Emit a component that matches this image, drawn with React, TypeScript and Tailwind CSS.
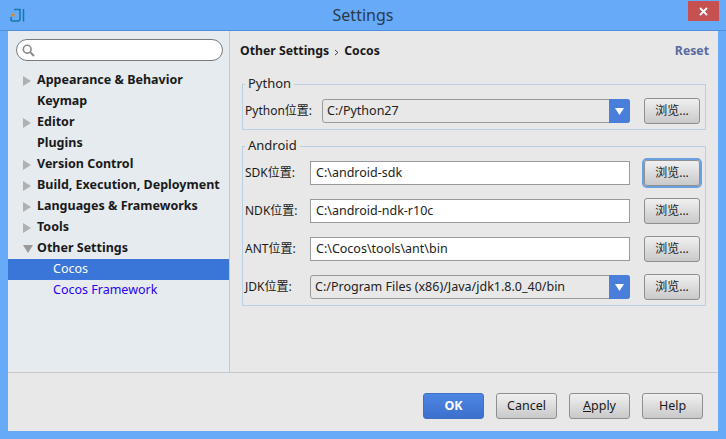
import React from "react";

const font = { fontFamily: '"Noto Sans", "Noto Sans CJK SC", sans-serif' };

const TreeRow = ({ label, arrow }: { label: string; arrow?: "right" | "down" }) => (
  <div className="flex h-[21px] items-center pl-[15px] text-[12.5px] font-bold text-[#1a1a1a]">
    <span className="flex w-[14px] items-center">
      {arrow === "right" && (
        <svg width="8" height="10" viewBox="0 0 8 10">
          <path d="M0 0 L8 5 L0 10 Z" fill="#b0b0b0" />
        </svg>
      )}
      {arrow === "down" && (
        <svg width="10" height="8" viewBox="0 0 10 8">
          <path d="M0 0 L10 0 L5 8 Z" fill="#9a9a9a" />
        </svg>
      )}
    </span>
    {label}
  </div>
);

const BrowseButton = ({ focused }: { focused?: boolean }) => (
  <button
    className={`h-[26px] w-[56px] shrink-0 rounded-[3px] border border-[#8f8f8f] bg-linear-to-b from-[#f0f0f0] to-[#c9c9c9] text-[12px] text-[#1a1a1a] ${
      focused ? "shadow-[0_0_0_2px_#6a9fe0]" : ""
    }`}
  >
    浏览...
  </button>
);

const PathInput = ({ label, value }: { label: string; value: string }) => (
  <div className="flex h-[26px] items-center">
    <span className="w-[65px] text-[12px] text-[#1a1a1a]">{label}</span>
    <div className="flex h-[24px] w-[320px] items-center border border-[#9a9a9a] bg-white pl-[5px] text-[12.5px] text-[#222]">
      {value}
    </div>
  </div>
);

const PathCombo = ({ value, width }: { value: string; width: string }) => (
  <div className={`flex h-[24px] items-center rounded-[3px] border border-[#9a9a9a] bg-[#e8e8e8] ${width}`}>
    <span className="flex-1 pl-[4px] text-[12.5px] text-[#222]">{value}</span>
    <span className="-m-px flex h-[24px] w-[21px] items-center justify-center rounded-r-[3px] bg-[#4a7edb]">
      <svg width="9" height="7" viewBox="0 0 9 7">
        <path d="M0 0 L9 0 L4.5 7 Z" fill="#fff" />
      </svg>
    </span>
  </div>
);

const DialogButton = ({ children, primary }: { children: React.ReactNode; primary?: boolean }) => (
  <button
    className={`h-[26px] w-[61px] rounded-[3px] border text-[12.5px] ${
      primary
        ? "border-[#3f70c4] bg-linear-to-b from-[#4d85e3] to-[#3d70cd] font-bold text-white"
        : "border-[#8f8f8f] bg-linear-to-b from-[#f0f0f0] to-[#c9c9c9] text-[#1a1a1a]"
    }`}
  >
    {children}
  </button>
);

export default function App() {
  return (
    <div style={font} className="flex h-[439px] w-[726px] flex-col overflow-hidden bg-[#67aaf7]">
      {/* title bar */}
      <div className="relative flex h-[31px] shrink-0 items-center justify-center border-b border-[#4f8fdb] text-[16px] text-[#2a3a4a]">
        <svg className="absolute left-[10px] top-[8px]" width="16" height="15" viewBox="0 0 16 15" fill="none">
          <path d="M4 1.5 H10 V11 Q10 13 7.5 13 H2.5 Q1 13 1 11 V9" stroke="#1478a8" strokeWidth="1.5" />
          <path d="M13.5 1 V13.5" stroke="#1478a8" strokeWidth="1.5" />
          <circle cx="3" cy="7" r="1.7" fill="#e08a1e" />
        </svg>
        Settings
        <div className="absolute right-[7px] top-px flex h-[20px] w-[31px] items-center justify-center bg-[#c75050]">
          <svg width="9" height="9" viewBox="0 0 9 9">
            <path d="M1 1 L8 8 M8 1 L1 8" stroke="#fff" strokeWidth="1.8" />
          </svg>
        </div>
      </div>

      <div className="ml-[8px] flex h-[400px] w-[710px] shrink-0 flex-col bg-[#e8e8e8]">
        <div className="flex h-[342px] border-b border-[#c8c8c8]">
          {/* sidebar */}
          <div className="w-[222px] shrink-0 border-r border-[#c8c8c8] bg-[#e6ebf0]">
            <div className="mx-[8px] mb-[9px] mt-[8px] flex h-[22px] w-[207px] items-center rounded-full border border-[#7a7a7a] bg-white pl-[5px]">
              <svg width="13" height="13" viewBox="0 0 13 13" fill="none">
                <circle cx="5.2" cy="5.2" r="3.9" stroke="#8a8a8a" strokeWidth="1.6" />
                <path d="M8 8 L12 12" stroke="#8a8a8a" strokeWidth="2" />
              </svg>
            </div>
            <TreeRow label="Appearance & Behavior" arrow="right" />
            <TreeRow label="Keymap" />
            <TreeRow label="Editor" arrow="right" />
            <TreeRow label="Plugins" />
            <TreeRow label="Version Control" arrow="right" />
            <TreeRow label="Build, Execution, Deployment" arrow="right" />
            <TreeRow label="Languages & Frameworks" arrow="right" />
            <TreeRow label="Tools" arrow="right" />
            <TreeRow label="Other Settings" arrow="down" />
            <div className="flex h-[21px] items-center bg-[#3a75d8] pl-[45px] text-[12.5px] text-white">Cocos</div>
            <div className="flex h-[21px] items-center pl-[45px] text-[12.5px] text-[#2a00f0]">Cocos Framework</div>
          </div>

          {/* content */}
          <div className="flex-1 px-[12px] pt-[10px]">
            <div className="-ml-[2px] -mr-[3px] flex h-[20px] items-center justify-between text-[12.25px] font-bold">
              <span className="flex items-center gap-[5px] text-[#1a1a1a]">
                Other Settings
                <svg width="5" height="7" viewBox="0 0 5 7" fill="none" className="mt-[2px]">
                  <path d="M1 1 L4 3.5 L1 6" stroke="#444" />
                </svg>
                Cocos
              </span>
              <span className="text-[#5a6aa0]">Reset</span>
            </div>

            <fieldset className="mt-[16px] h-[53px] w-[464px] border border-[#b9cfe4] pl-[2px] pr-[5px]">
              <legend className="px-[3px] pb-px text-[13px] leading-[13px] text-[#222]">Python</legend>
              <div className="mt-[7px] flex items-center justify-between">
                <div className="flex items-center">
                  <span className="w-[77px] text-[12px] text-[#1a1a1a]">Python位置:</span>
                  <PathCombo value="C:/Python27" width="w-[308px]" />
                </div>
                <BrowseButton />
              </div>
            </fieldset>

            <fieldset className="mt-[9px] h-[167px] w-[464px] border border-[#b9cfe4] pl-[2px] pr-[5px]">
              <legend className="px-[3px] pb-px text-[13px] leading-[13px] text-[#222]">Android</legend>
              <div className="mt-[7px] flex flex-col gap-[12px]">
                <div className="flex items-center justify-between">
                  <PathInput label="SDK位置:" value="C:\android-sdk" />
                  <BrowseButton focused />
                </div>
                <div className="flex items-center justify-between">
                  <PathInput label="NDK位置:" value="C:\android-ndk-r10c" />
                  <BrowseButton />
                </div>
                <div className="flex items-center justify-between">
                  <PathInput label="ANT位置:" value="C:\Cocos\tools\ant\bin" />
                  <BrowseButton />
                </div>
                <div className="flex items-center justify-between">
                  <div className="flex items-center">
                    <span className="w-[65px] text-[12px] text-[#1a1a1a]">JDK位置:</span>
                    <PathCombo value="C:/Program Files (x86)/Java/jdk1.8.0_40/bin" width="w-[320px]" />
                  </div>
                  <BrowseButton />
                </div>
              </div>
            </fieldset>
          </div>
        </div>

        {/* footer */}
        <div className="flex flex-1 items-start justify-end gap-[12px] pr-[15px] pt-[20px]">
          <DialogButton primary>OK</DialogButton>
          <DialogButton>Cancel</DialogButton>
          <DialogButton>
            <span className="underline">A</span>pply
          </DialogButton>
          <DialogButton>Help</DialogButton>
        </div>
      </div>
    </div>
  );
}
